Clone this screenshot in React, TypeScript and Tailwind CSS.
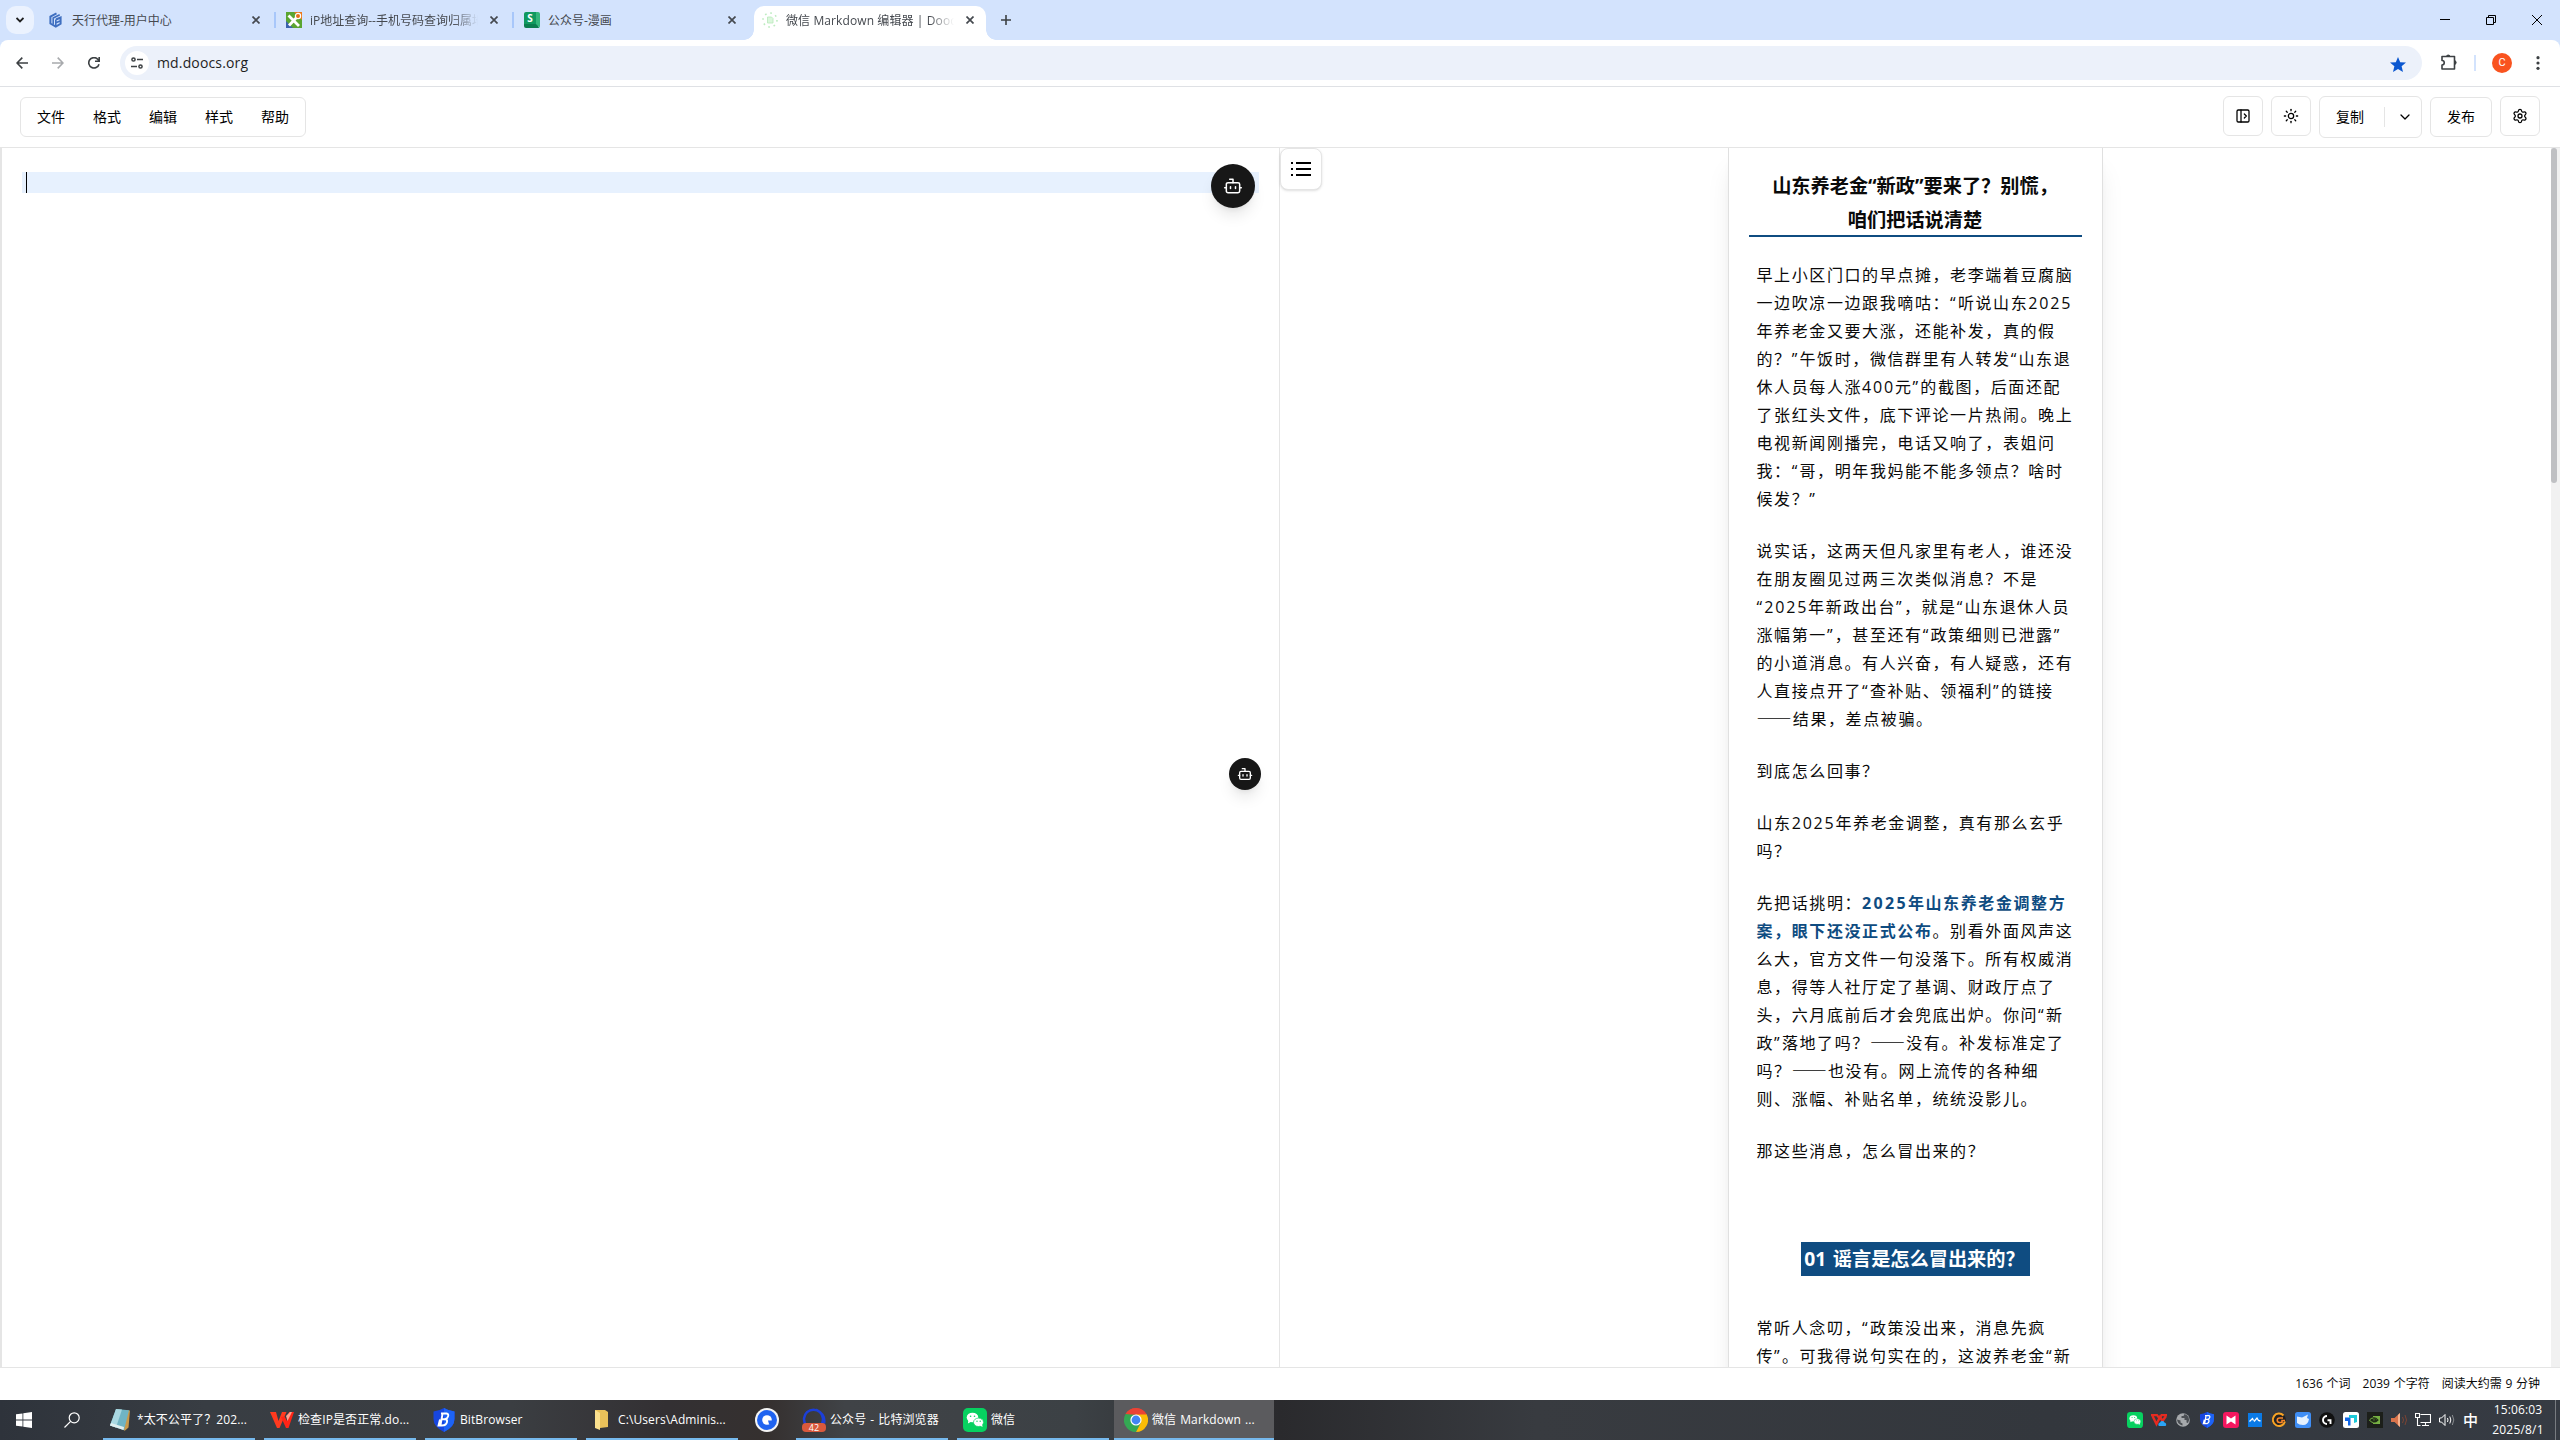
import React from 'react';
import { Bot, ChevronDown, PanelLeftOpen, Settings, Sun } from 'lucide-react';

const paragraphs: string[][] = [
  [
    '早上小区门口的早点摊，老李端着豆腐脑',
    '一边吹凉一边跟我嘀咕：“听说山东2025',
    '年养老金又要大涨，还能补发，真的假',
    '的？”午饭时，微信群里有人转发“山东退',
    '休人员每人涨400元”的截图，后面还配',
    '了张红头文件，底下评论一片热闹。晚上',
    '电视新闻刚播完，电话又响了，表姐问',
    '我：“哥，明年我妈能不能多领点？啥时',
    '候发？”',
  ],
  [
    '说实话，这两天但凡家里有老人，谁还没',
    '在朋友圈见过两三次类似消息？不是',
    '“2025年新政出台”，就是“山东退休人员',
    '涨幅第一”，甚至还有“政策细则已泄露”',
    '的小道消息。有人兴奋，有人疑惑，还有',
    '人直接点开了“查补贴、领福利”的链接',
    '——结果，差点被骗。',
  ],
  ['到底怎么回事？'],
  ['山东2025年养老金调整，真有那么玄乎', '吗？'],
  [
    '先把话挑明：**2025年山东养老金调整方**',
    '**案，眼下还没正式公布**。别看外面风声这',
    '么大，官方文件一句没落下。所有权威消',
    '息，得等人社厅定了基调、财政厅点了',
    '头，六月底前后才会兜底出炉。你问“新',
    '政”落地了吗？——没有。补发标准定了',
    '吗？——也没有。网上流传的各种细',
    '则、涨幅、补贴名单，统统没影儿。',
  ],
  ['那这些消息，怎么冒出来的？'],
];

function Line({ text }: { text: string }) {
  const parts = text.split(/(\*\*.+?\*\*|——|[“”]|\d+)/);
  return (
    <span className="block whitespace-nowrap">
      {parts.map((p, i) => {
        if (p.startsWith('**')) {
          const digits = p.match(/\d+/)?.[0] ?? '';
          return (
            <strong key={i} className="font-bold text-[#0f4c81]">
              <span className="tracking-[2.3px]">{digits}</span>
              {p.slice(2 + digits.length, -2)}
            </strong>
          );
        }
        if (p === '——')
          return (
            <span key={i} className="font-['Noto_Sans_CJK_SC'] text-[17.5px] leading-none tracking-[1.3px]">
              {p}
            </span>
          );
        if (p === '“' || p === '”')
          return (
            <span key={i} className="tracking-[2.2px]">
              {p}
            </span>
          );
        if (/^\d+$/.test(p))
          return (
            <span key={i} className="tracking-[1.8px]">
              {p}
            </span>
          );
        return p;
      })}
    </span>
  );
}

function Paragraph({ lines }: { lines: string[] }) {
  return (
    <p className="mx-2 mb-6 text-base leading-7 tracking-[1.6px]">
      {lines.map((l) => (
        <Line key={l} text={l} />
      ))}
    </p>
  );
}

function Cross({ className }: { className?: string }) {
  return (
    <svg viewBox="0 0 8 8" className={`size-2 shrink-0 ${className ?? ''}`} fill="none" stroke="currentColor" strokeWidth="1.7">
      <path d="M.5.5l7 7M7.5.5l-7 7" />
    </svg>
  );
}

function Tab({ icon, title, className, fade }: { icon: React.ReactNode; title: string; className: string; fade?: boolean }) {
  return (
    <div className={`flex h-7 items-center text-[#45494f] ${className}`}>
      <span className="mr-2 size-4 shrink-0">{icon}</span>
      <span
        className={`min-w-0 flex-1 overflow-hidden pt-px text-xs leading-5 whitespace-nowrap [font-variant-ligatures:none] ${
          fade ? '[mask-image:linear-gradient(to_right,black_85%,transparent)]' : ''
        }`}
      >
        {title}
      </span>
      <Cross className="ml-3" />
    </div>
  );
}

function HexIcon() {
  return (
    <svg viewBox="0 0 16 16" className="size-4" fill="none" stroke="#3f6fc0" strokeWidth="2">
      <path d="M8.500 1.400L2.400 4.600v6.900l5.400 3.100 4.800-2.800V5.500L8 7.500" />
      <path d="M5.200 12.500V6l6.500-3.200M7.800 7.500v6.500M8 10.800l4-1.800" strokeWidth="1.600" />
    </svg>
  );
}

function IpIcon() {
  return (
    <svg viewBox="0 0 16 16" className="size-4">
      <rect width="16" height="16" fill="#5aa532" />
      <path d="M0 9l7 7H0z" fill="#3a62ad" />
      <path d="M8 0h8v8z" fill="#ec7a1c" />
      <path d="M2.500 3.500L13 14M3 13.500L11 5" stroke="#fff" strokeWidth="2.800" />
      <circle cx="12" cy="4" r="2.600" fill="#e8701a" stroke="#fff" strokeWidth="1.200" />
    </svg>
  );
}

function SheetIcon() {
  return (
    <span className="flex h-4 w-4 justify-center rounded-[2px] border-r-4 border-b-4 border-r-[#35b67c] border-b-[#0b7d4f] bg-[#10995f] text-[10px] leading-3 font-bold text-white">
      S
    </span>
  );
}

function DoocsIcon() {
  return (
    <svg viewBox="0 0 16 16" className="size-4">
      <circle cx="8" cy="8" r="7" fill="none" stroke="#bdecc0" strokeWidth="1.600" strokeDasharray="1.700 3.800" />
      <path d="M5.500 5h4l1.500 1.500V11h-5.500z" fill="#dcf7dd" stroke="#b7e9ba" strokeWidth=".8" />
    </svg>
  );
}

function TabStrip() {
  return (
    <div className="flex h-10 bg-[#d3e3fd]">
      <div className="mt-1.5 ml-1.5 flex size-7 items-center justify-center rounded-[10px] bg-[#ebf2fe]">
        <svg viewBox="0 0 8 6" className="h-1.5 w-2" fill="none" stroke="#1f1f1f" strokeWidth="1.800">
          <path d="M.5 1L4 4.500 7.500 1" />
        </svg>
      </div>
      <Tab icon={<HexIcon />} title="天行代理-用户中心" className="mt-1.5 ml-3.5 w-[212px]" />
      <div className="mt-3 ml-[14px] h-4 w-0.5 bg-[#a8c7fa]" />
      <Tab icon={<IpIcon />} title="iP地址查询--手机号码查询归属地" className="mt-1.5 ml-2.5 w-[212px]" fade />
      <div className="mt-3 ml-[14px] h-4 w-0.5 bg-[#a8c7fa]" />
      <Tab icon={<SheetIcon />} title="公众号-漫画" className="mt-1.5 ml-2.5 w-[212px]" />
      <div className="relative mt-1.5 ml-[18px] h-[34px] w-[232px] rounded-t-[10px] bg-white">
        <span className="absolute bottom-0 -left-2.5 size-2.5 bg-[radial-gradient(circle_at_0_0,#d3e3fd_9.5px,white_10px)]" />
        <span className="absolute -right-2.5 bottom-0 size-2.5 bg-[radial-gradient(circle_at_100%_0,#d3e3fd_9.5px,white_10px)]" />
        <Tab icon={<DoocsIcon />} title="微信 Markdown 编辑器 | Doocs" className="ml-2 w-[212px] tracking-[.1px] text-[#1f1f1f]" fade />
      </div>
      <svg viewBox="0 0 10 10" className="mt-[15px] ml-[15px] size-2.5" stroke="#3c4043" strokeWidth="1.600">
        <path d="M5 0v10M0 5h10" />
      </svg>
      <div className="mt-[15px] mr-[18px] ml-auto flex gap-9 text-black">
        <svg viewBox="0 0 10 10" className="size-2.5" stroke="currentColor">
          <path d="M0 4.500h10" />
        </svg>
        <svg viewBox="0 0 10 10" className="size-2.5" fill="none" stroke="currentColor">
          <path d="M.5 2.500h7v7h-7zM2.500 2.500v-2h7v7h-2" />
        </svg>
        <svg viewBox="0 0 10 10" className="size-2.5" stroke="currentColor">
          <path d="M0 0l10 10M10 0L0 10" />
        </svg>
      </div>
    </div>
  );
}

function AddressBar() {
  return (
    <div className="bg-[#d3e3fd]">
      <div className="flex h-[47px] items-start rounded-t-lg border-b border-[#dfe1e5] bg-white">
        <svg viewBox="0 0 12 12" className="mt-[17px] ml-4 size-3" fill="none" stroke="#3c4043" strokeWidth="1.600">
          <path d="M12 6H1M6.300.6L1 6l5.300 5.400" />
        </svg>
        <svg viewBox="0 0 12 12" className="mt-[17px] ml-6 size-3" fill="none" stroke="#a8aaad" strokeWidth="1.600">
          <path d="M0 6h11M5.700.6L11 6l-5.300 5.400" />
        </svg>
        <svg viewBox="0 0 12 12" className="mt-[17px] ml-6 size-3" fill="none" stroke="#3c4043" strokeWidth="1.600">
          <path d="M11 7.200A5.200 5.200 0 1 1 9.700 2.200L11.200 3.800M11.200 0v4.200H7" />
        </svg>
        <div className="mt-1.5 ml-5 flex h-[34px] w-[2302px] items-center rounded-full bg-[#ecf1fa] pr-4 pl-[5px]">
          <span className="flex size-6 items-center justify-center rounded-full bg-white">
            <svg viewBox="0 0 12 12" className="size-3" fill="none" stroke="#3c4043" strokeWidth="1.500">
              <circle cx="2.500" cy="2.500" r="1.600" />
              <path d="M6 2.500h6M0 9.500h6" />
              <circle cx="9.500" cy="9.500" r="1.600" />
            </svg>
          </span>
          <span className="ml-2 text-sm tracking-[.15px] text-[#1f1f1f]">md.doocs.org</span>
          <svg viewBox="0 0 16 15" className="mt-0.5 ml-auto h-[15px] w-4" fill="#0b57d0">
            <path d="M8 0l2.200 5.200 5.800.4-4.400 3.700L13 15l-5-3.100L3 15l1.400-5.700L0 5.600l5.800-.4z" />
          </svg>
        </div>
        <svg viewBox="0 0 16 16" className="mt-3.5 ml-[19px] size-4" fill="none" stroke="#3c4043" strokeWidth="1.600">
          <path d="M1 2.500h12.500v12.500H1v-4a2.200 2.200 0 0 0 0-4.500z" strokeLinejoin="round" />
          <path d="M5.500 2.200a1.800 1.500 0 0 1 3.500 0zM14 6.800a1.500 1.800 0 0 1 0 3.500z" fill="#3c4043" strokeWidth="1" />
        </svg>
        <span className="mt-[15px] ml-[17px] h-4 w-0.5 bg-[#d3e3fd]" />
        <span className="mt-[13px] ml-4 flex size-5 items-center justify-center rounded-full bg-[#f9531f] font-[Roboto] text-[11px] text-white">
          C
        </span>
        <svg viewBox="0 0 4 14" className="mt-4 ml-6 h-3.5 w-1" fill="#3c4043">
          <circle cx="2" cy="1.700" r="1.600" />
          <circle cx="2" cy="7" r="1.600" />
          <circle cx="2" cy="12.300" r="1.600" />
        </svg>
      </div>
    </div>
  );
}

function EditorHeader() {
  const box = 'flex items-center justify-center rounded-md border border-[#e5e5e5] bg-white';
  return (
    <header className="flex h-[61px] items-start border-b border-[#e5e5e5] px-5 text-sm text-black">
      <nav className="mt-2.5 flex h-10 w-[286px] items-center gap-7 rounded-md border border-[#e5e5e5] pl-4">
        {['文件', '格式', '编辑', '样式', '帮助'].map((m) => (
          <span key={m}>{m}</span>
        ))}
      </nav>
      <div className="mt-[9px] ml-auto flex items-start gap-2">
        <div className={`${box} size-10`}>
          <PanelLeftOpen size={16} strokeWidth={1.9} />
        </div>
        <div className={`${box} size-10`}>
          <Sun size={16} strokeWidth={1.9} />
        </div>
        <div className="flex h-[42px] w-[103px] items-center rounded-md border border-[#e5e5e5] bg-white">
          <span className="ml-4">复制</span>
          <span className="mr-3 ml-5 h-5 w-px bg-[#e5e5e5]" />
          <ChevronDown size={16} strokeWidth={1.9} />
        </div>
        <div className={`${box} mt-px h-10 w-[62px]`}>发布</div>
        <div className={`${box} size-10`}>
          <Settings size={16} strokeWidth={1.9} />
        </div>
      </div>
    </header>
  );
}

function Workspace() {
  return (
    <main className="flex h-[1219px] overflow-hidden">
      <section className="relative h-full w-[1279px] border-l-2 border-[#e5e5e5] pt-6 pl-5">
        <div className="h-[21px] w-[1237px] bg-[#e7f1fe] pl-1">
          <div className="h-full w-px bg-black" />
        </div>
        <div className="absolute top-4 left-[1209px] flex size-11 items-center justify-center rounded-full bg-[#171717] text-white shadow-lg">
          <Bot size={20} strokeWidth={1.8} />
        </div>
        <div className="absolute top-[610px] left-[1227px] flex size-8 items-center justify-center rounded-full bg-[#171717] text-white shadow-lg">
          <Bot size={16} strokeWidth={2} />
        </div>
      </section>
      <section className="relative flex h-full flex-1 justify-center border-l border-[#e5e5e5]">
        <div className="absolute top-0 left-0 flex h-[42px] w-[42px] items-center justify-center rounded-lg border border-[#e5e5e5] bg-white shadow-sm">
          <svg viewBox="0 0 20 14" className="h-3.5 w-5" stroke="#000" strokeWidth="2">
            <path d="M5 1h15M5 7h15M5 13h15M0 1h2M0 7h2M0 13h2" />
          </svg>
        </div>
        <article className="ml-[-10px] h-[1400px] w-[375px] border-x border-[#e0e0e0] p-5 text-[#0a0a0a] shadow-xl">
          <h1 className="mb-[24.8px] h-[69.2px] border-b-2 border-[#0f4c81] pt-px text-center text-[19.2px] leading-[33.6px] font-bold">
            <span className="block">山东养老金“新政”要来了？别慌，</span>
            <span className="block">咱们把话说清楚</span>
          </h1>
          <div className="-mt-[1px]">
            {paragraphs.map((lines) => (
              <Paragraph key={lines[0]} lines={lines} />
            ))}
          </div>
          <h2 className="mx-auto mt-[77px] mb-[38px] h-[33.6px] w-[229px] bg-[#0f4c81] px-[3.84px] text-[19.2px] leading-[34.6px] font-bold [word-spacing:1.5px] whitespace-nowrap text-white">
            01 谣言是怎么冒出来的？
          </h2>
          <Paragraph lines={['常听人念叨，“政策没出来，消息先疯', '传”。可我得说句实在的，这波养老金“新']} />
        </article>
        <div className="absolute top-0 right-0 h-full w-[9px] bg-[#f1f1f1]">
          <div className="h-[335px] w-1.5 rounded-full bg-[#bfc0c3]" />
        </div>
      </section>
    </main>
  );
}

function StatusBar() {
  return (
    <footer className="flex h-[33px] items-center justify-end gap-3 border-t border-[#e5e5e5] pr-5 text-xs [word-spacing:.6px] text-[#0a0a0a]">
      <span>1636 个词</span>
      <span>2039 个字符</span>
      <span>阅读大约需 9 分钟</span>
    </footer>
  );
}

function WeChat({ className }: { className: string }) {
  return (
    <svg viewBox="0 0 24 24" className={className}>
      <rect width="24" height="24" rx="5" fill="#07d160" />
      <ellipse cx="9.500" cy="9.500" rx="5.800" ry="4.800" fill="#fff" />
      <path d="M5.500 12l-.6 3.500 3.600-2z" fill="#fff" />
      <ellipse cx="15.500" cy="14.300" rx="5" ry="4.200" fill="#fff" stroke="#07d160" strokeWidth=".7" />
      <path d="M17 17.500l2.500 1.500-.4-3z" fill="#fff" />
      <g fill="#07d160">
        <circle cx="7.600" cy="8.300" r=".8" />
        <circle cx="11.500" cy="8.300" r=".8" />
        <circle cx="14" cy="13.300" r=".7" />
        <circle cx="17.200" cy="13.300" r=".7" />
      </g>
    </svg>
  );
}

function Shield({ className }: { className: string }) {
  return (
    <svg viewBox="0 0 24 24" className={className}>
      <path d="M1.500 3.500Q7 3 12 0q5 3 10.500 3.500V11q0 8-10.500 13Q1.500 19 1.500 11z" fill="#1746e0" />
      <path d="M12 0q5 3 10.500 3.500V11q0 8-10.500 13z" fill="#1d63f5" />
      <path
        d="M9 5.500h5.500q2.500.5 1.500 3-.6 1.800-2.500 2.500 2 .8 1.500 3-.8 3.500-5 3.500H6.500L8 11.500M10.500 6L8.500 17M9 11.200h5"
        fill="none"
        stroke="#fff"
        strokeWidth="1.900"
      />
    </svg>
  );
}

function Chrome() {
  return (
    <svg viewBox="0 0 24 24" className="size-6">
      <path d="M12 12L1.600 6A12 12 0 0 1 22.400 6z" fill="#ea4335" />
      <path d="M12 12L1.600 6A12 12 0 0 0 12 24z" fill="#34a853" />
      <path d="M7.200 14.800L1.600 6 12 6.500zM16.800 14.700L12 24l-4.800-9.200z" fill="#34a853" />
      <path d="M16.800 14.700L12 24A12 12 0 0 0 22.400 6H12z" fill="#fbbc05" />
      <path d="M12 6.500L1.600 6A12 12 0 0 1 22.400 6.500z" fill="#ea4335" />
      <circle cx="12" cy="12" r="5.600" fill="#fff" />
      <circle cx="12" cy="12" r="4.400" fill="#4285f4" />
    </svg>
  );
}

function Task({ icon, title, className }: { icon: React.ReactNode; title: string; className: string }) {
  return (
    <div className={`flex h-10 items-center border-b-2 border-[#76b9ed] pt-0.5 ${className}`}>
      <span className="flex w-6 shrink-0 justify-center">{icon}</span>
      <span className="ml-1 text-xs tracking-[.1px] [word-spacing:.8px] whitespace-nowrap text-white">{title}</span>
    </div>
  );
}

const tray: React.ReactNode[] = [
  <WeChat key="wechat" className="size-4" />,
  <svg key="wps" viewBox="0 0 16 16" className="size-4" fill="none">
    <path d="M0 3.200h6l2.500 3.300 2-3.300H16" stroke="#e52b21" strokeWidth="2.200" />
    <path d="M1.500 4l4 8L9 5l2.500 4L15 4" stroke="#e52b21" strokeWidth="2.400" />
    <path d="M8 14a2 2 0 0 1 1-3.500 2.500 2.500 0 0 1 4.500 0A2 2 0 0 1 14.500 14z" fill="#2ba4f5" />
  </svg>,
  <svg key="globe" viewBox="0 0 16 16" className="size-4">
    <circle cx="8" cy="8" r="6.800" fill="#a6a9ac" />
    <path d="M2 7.500l3.500 1v2l2 1v2l-1.500-.5Q2.500 11.500 2 7.500zM9.500 2l-1 2H6.500v2h3v2h2v2.500l1.500.5q2-3 .5-6-1.500-2.500-4-3z" fill="#4a4e53" />
  </svg>,
  <Shield key="bit" className="size-4" />,
  <svg key="pink" viewBox="0 0 16 16" className="size-4">
    <rect width="16" height="16" rx="3" fill="#f5175f" />
    <path d="M3.500 3.500L8 6.500l4.500-3v9L8 9.500l-4.500 3z" fill="#fff" />
  </svg>,
  <svg key="blue" viewBox="0 0 16 16" className="size-4">
    <rect x="1" y="1" width="14" height="14" fill="#0a7ae6" />
    <path d="M2.500 9.500l3-3 1 2M7 9.500L10 6l1.500 2.500L13.500 9" stroke="#fff" strokeWidth="1.300" fill="none" />
  </svg>,
  <svg key="orange" viewBox="0 0 16 16" className="size-4">
    <circle cx="8" cy="8" r="7" fill="#222" />
    <path d="M12.500 3.500A6.200 6.200 0 1 0 14 9.500" fill="none" stroke="#f9a425" strokeWidth="2" />
    <path d="M12 6H8.500a2 2 0 0 0 0 4.500H11V8.500h3" fill="none" stroke="#f9852a" strokeWidth="1.600" />
  </svg>,
  <svg key="bird" viewBox="0 0 16 16" className="size-4">
    <rect width="16" height="16" rx="2.500" fill="#3f8ef5" />
    <path d="M2 4.500l5 1 6-3-1 3.500 2 1q-1 6-6 6-4 0-6-2z" fill="#e4f1ff" />
  </svg>,
  <svg key="logi" viewBox="0 0 16 16" className="size-4">
    <circle cx="8" cy="8" r="7.800" fill="#111" />
    <path d="M8 4A4 4 0 1 0 8 12M8.500 8.200h3V12" fill="none" stroke="#fff" strokeWidth="1.900" />
  </svg>,
  <svg key="todesk" viewBox="0 0 16 16" className="size-4">
    <rect width="16" height="16" rx="2.500" fill="#fff" />
    <path d="M2 5.500h5.500v8H5V9H2z" fill="#1167e8" />
    <path d="M6 3h8v7l-3 1V6H6z" fill="#1cc9d8" />
  </svg>,
  <svg key="nvidia" viewBox="0 0 16 16" className="size-4">
    <rect width="16" height="16" fill="#1c1f1a" />
    <path d="M6 4h7v8H6z" fill="#76b043" />
    <path d="M2.500 8Q7 3.500 11 8q-4 4-8.500 0zM5 8q2-2 4 0-2 2-4 0z" fill="none" stroke="#1f2b16" strokeWidth="1.100" />
    <path d="M2.500 8q1.500-2 3.500-2M2.500 8Q4 10.500 6 10.500" fill="none" stroke="#76b043" />
  </svg>,
  <svg key="speaker" viewBox="0 0 16 16" className="size-4">
    <path d="M0 6h3.500L9 1v14L3.500 10H0z" fill="#d9734b" />
    <path d="M7 3l2-2v14l-2-2z" fill="#f5b28d" />
    <path d="M11.500 5q2 3 0 6M14 3q3 5 0 10" fill="none" stroke="#7d4433" />
  </svg>,
  <svg key="net" viewBox="0 0 16 16" className="size-4" fill="none" stroke="#fff" strokeWidth="1.100">
    <path d="M5.500 2.500h10v8h-10M10.500 10.500v3M7 13.500h7M.5 1.500h4v4h-4zM2.500 5.500v8h3" />
  </svg>,
  <svg key="vol" viewBox="0 0 16 16" className="size-4" fill="none" stroke="#fff">
    <path d="M.5 6h2L6 2.500v11L2.500 10h-2zM8.500 6q1 2 0 4M10.800 4.500q2 3.500 0 7" />
    <path d="M13.300 3q3 5 0 10" stroke="#8a8d91" />
  </svg>,
];

function Taskbar() {
  return (
    <div className="flex h-10 bg-[linear-gradient(90deg,#2e333b_0%,#383d43_8%,#3b3e42_20%,#333033_26%,#35302f_30%,#404347_33%,#3c4145_42%,#2a2a2d_50%,#383b40_60%,#33373d_80%,#363b43_100%)] text-white">
      <svg viewBox="0 0 16 16" className="mt-3 ml-4 size-4" fill="#fff">
        <path d="M0 2.300l6.500-.9v6.200H0zM7.300 1.300L16 0v7.600H7.300zM0 8.400h6.500v6.200L0 13.700zM7.300 8.400H16V16l-8.700-1.300z" />
      </svg>
      <svg viewBox="0 0 16 16" className="mt-3 ml-8 size-4" fill="none" stroke="#fff" strokeWidth="1.200">
        <circle cx="10.200" cy="5.800" r="5" />
        <path d="M6.600 9.400L.5 15.500" />
      </svg>
      <Task
        className="ml-[23px] w-[152px] pl-1.5"
        title="*太不公平了？202..."
        icon={
          <svg viewBox="0 0 24 24" className="size-6">
            <path d="M7 1.500l14 1-1.500 17-4 3.500z" fill="#c99a4b" />
            <path d="M7 1l13 1.200-5 20L1 17.500z" fill="#6fb4c4" />
            <path d="M7 1l6 .5L7 19.500l-6-2z" fill="#a9d8e2" />
            <path d="M2 15l13 4-.5 3L1 17.500z" fill="#dfeef0" />
          </svg>
        }
      />
      <Task
        className="ml-[9px] w-[152px] pl-1.5"
        title="检查IP是否正常.do..."
        icon={
          <svg viewBox="0 0 24 24" className="size-6" fill="none">
            <path d="M0 4h6l2.500 9L12 4h4.500l-7 16H7z" fill="#ff3a1f" />
            <path d="M11 9l3.500-.5L17 13l2-9h5l-5.500 16H16z" fill="#ff2416" />
            <path d="M16 8l4-4h2l-4.500 9z" fill="#ffa08e" />
          </svg>
        }
      />
      <Task className="ml-[9px] w-[152px] pl-[7px]" title="BitBrowser" icon={<Shield className="size-6" />} />
      <Task
        className="ml-[9px] w-[152px] pl-1"
        title="C:\Users\Adminis..."
        icon={
          <svg viewBox="0 0 14 20" className="h-5 w-3.5">
            <path d="M0 0h10l3 2v15l-8 1z" fill="#e9c15a" />
            <path d="M0 0l5 3v17l-5-2z" fill="#fbe08e" />
          </svg>
        }
      />
      <svg viewBox="0 0 24 24" className="mt-2 ml-[17px] size-6">
        <circle cx="12" cy="12" r="12" fill="#f4f4f4" />
        <circle cx="12" cy="12" r="10" fill="#1f63f0" />
        <circle cx="12" cy="12" r="4.800" fill="#fff" />
        <path d="M13 12.500h4.500V16H14z" fill="#1f63f0" />
      </svg>
      <Task
        className="ml-[17px] w-[152px] pl-1.5"
        title="公众号 - 比特浏览器"
        icon={
          <span className="relative block size-6">
            <svg viewBox="0 0 24 24" className="size-6" fill="none" stroke="#1c3fd8" strokeWidth="2.500">
              <path d="M4 17A9.500 9.500 0 1 1 19 17M14 1.500q10 5 8 14" />
            </svg>
            <span className="absolute bottom-0 left-0 flex h-[9px] w-6 items-center justify-center rounded-sm bg-[#d9593c] text-[9px] leading-none">
              42
            </span>
          </span>
        }
      />
      <Task className="ml-[9px] w-[152px] pl-1.5" title="微信" icon={<WeChat className="size-6" />} />
      <Task className="ml-[5px] w-40 bg-[#5b5b5e] pl-2.5" title="微信 Markdown ..." icon={<Chrome />} />
      <div className="ml-auto flex items-center gap-2">
        {tray}
        <span className="w-4 text-[15px] leading-4 font-medium">中</span>
      </div>
      <div className="ml-3 w-[54px] text-center text-xs">
        <div className="leading-5 tracking-[.1px]">15:06:03</div>
        <div className="leading-[19px] tracking-[.2px]">2025/8/1</div>
      </div>
      <div className="mr-1 ml-2.5 w-px bg-[#787b80]" />
    </div>
  );
}

export default function App() {
  return (
    <div
      lang="zh-CN"
      className="h-[1440px] w-[2560px] overflow-hidden bg-white font-['Open_Sans','Noto_Sans_CJK_SC',sans-serif]"
    >
      <TabStrip />
      <AddressBar />
      <EditorHeader />
      <Workspace />
      <StatusBar />
      <Taskbar />
    </div>
  );
}
